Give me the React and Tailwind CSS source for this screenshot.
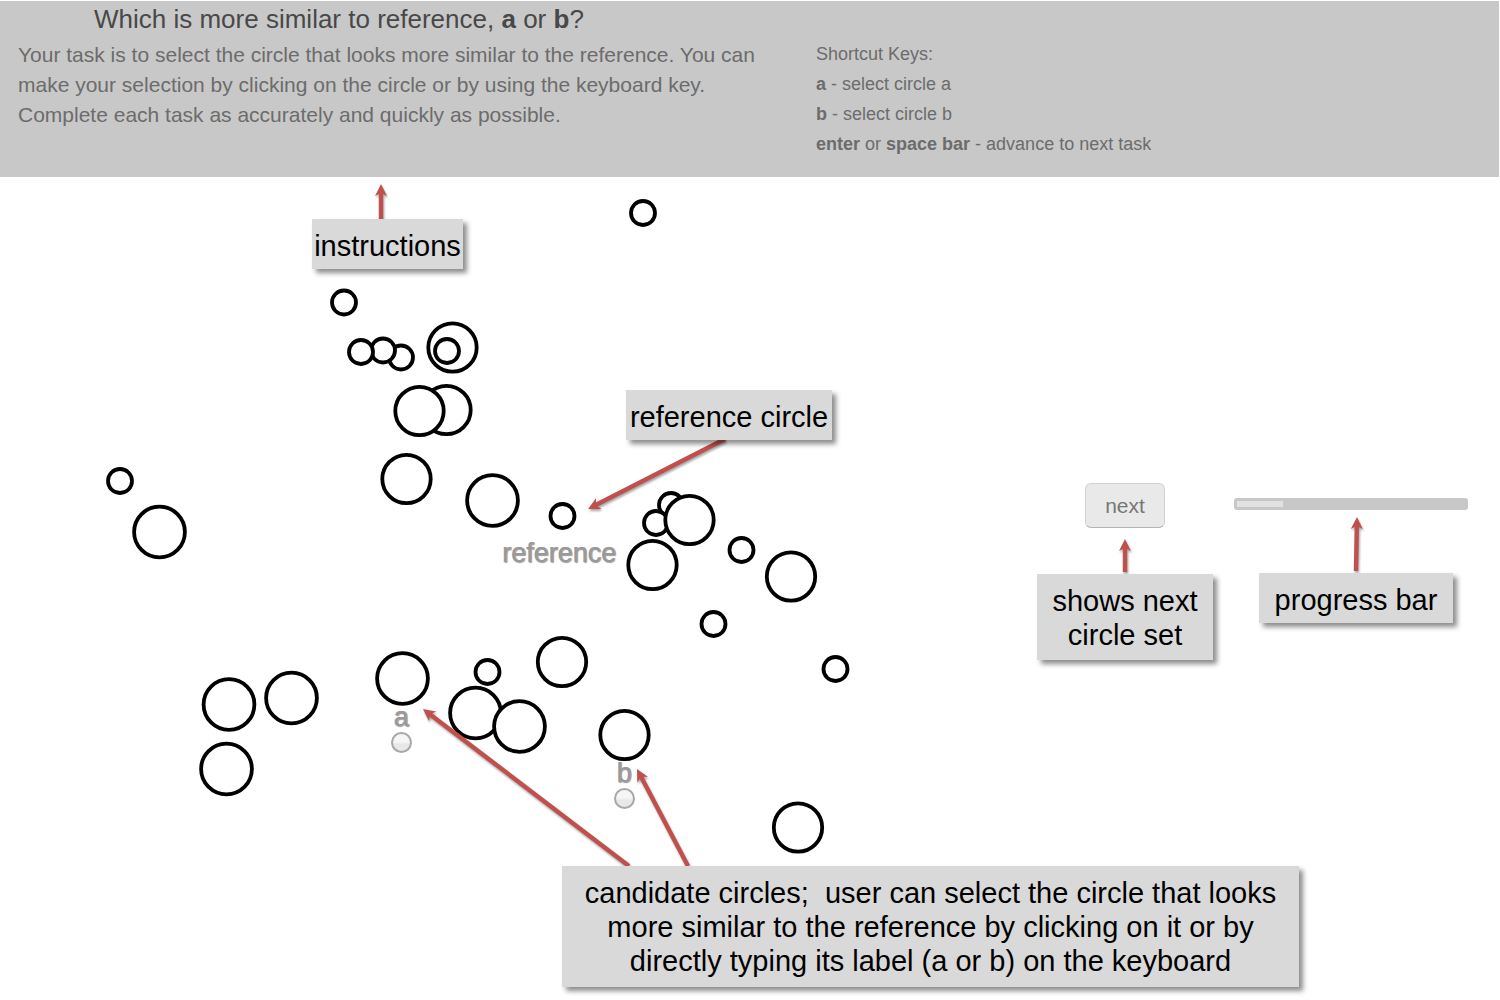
import { useEffect, useState } from "react";

const SMALL = 12;
const MEDIUM = 24.2;
const LARGE = 25.4;

const circles = [
  [643, 213, SMALL],
  [344, 302.5, SMALL],
  [401, 357.5, SMALL],
  [383, 350.5, SMALL],
  [361, 352, SMALL],
  [452.5, 347.5, MEDIUM],
  [447, 351, SMALL],
  [446.5, 410, MEDIUM],
  [419.5, 411, MEDIUM],
  [406.5, 479, MEDIUM],
  [492.5, 500.5, LARGE],
  [562.5, 516, SMALL],
  [671, 505, SMALL],
  [656, 523, SMALL],
  [689.5, 520, MEDIUM],
  [652.5, 565, MEDIUM],
  [741.5, 550, SMALL],
  [791, 576.5, MEDIUM],
  [713.5, 624, SMALL],
  [835.5, 669, SMALL],
  [120, 481, SMALL],
  [159.5, 532, LARGE],
  [229, 704.5, LARGE],
  [291.5, 698, LARGE],
  [226.5, 769, LARGE],
  [402.5, 678.5, LARGE, "a"],
  [487.5, 672, SMALL],
  [475.5, 713, LARGE],
  [519.5, 726.5, LARGE],
  [562, 662, MEDIUM],
  [624.5, 735, MEDIUM, "b"],
  [798, 827.5, MEDIUM],
];

const canvasArrows = [
  [381, 220, 381, 184],
  [725, 439, 588, 509],
  [629, 866, 423, 709],
  [688, 866, 637, 769],
];

function Arrow({ from, to }) {
  const [x1, y1] = from;
  const [x2, y2] = to;
  const length = Math.hypot(x2 - x1, y2 - y1);
  const angle = (Math.atan2(y2 - y1, x2 - x1) * 180) / Math.PI;
  return (
    <g className="drop-shadow-[1px_2px_1px_rgba(0,0,0,0.35)]">
      <g transform={`translate(${x1} ${y1}) rotate(${angle})`} fill="#c0504d">
        <rect x="0" y="-2.2" width={length - 7} height="4.4" />
        <path d={`M${length} 0 L${length - 12} -6 L${length - 9} 0 L${length - 12} 6 Z`} />
      </g>
    </g>
  );
}

function Callout({ className, children }) {
  return (
    <div
      className={`bg-[#d9d9d9] pt-[10px] text-center text-[29px] leading-[34px] text-black shadow-[4px_4px_5px_rgba(0,0,0,0.45)] ${className}`}
    >
      {children}
    </div>
  );
}

function Candidate({ name, selected, onSelect, className }) {
  return (
    <label
      className={`absolute flex w-6 flex-col items-center gap-[3px] text-[27px] leading-6 text-[#999999] [text-shadow:1px_0_0_#a8a8a8,1px_1px_1px_#999999] ${className}`}
    >
      {name}
      <input
        type="radio"
        name="candidate"
        value={name}
        checked={selected === name}
        onChange={() => onSelect(name)}
        className="size-[21px] appearance-none rounded-full border-2 border-[#a8a8a8] bg-linear-to-b from-[#f6f6f6] from-45% to-[#e8e8e8] to-60% checked:border-[6px]"
      />
    </label>
  );
}

export default function App() {
  const [selected, setSelected] = useState(null);

  useEffect(() => {
    const onKey = (e) => {
      if (e.key === "a" || e.key === "b") setSelected(e.key);
    };
    window.addEventListener("keydown", onKey);
    return () => window.removeEventListener("keydown", onKey);
  }, []);

  return (
    <div className="min-h-screen overflow-x-hidden bg-white pt-px font-['Liberation_Sans',Arial,sans-serif]">
      <header className="mr-px flex h-44 gap-14 bg-[#c8c8c8] pl-[18px] text-[#6c6c6c]">
        <div className="w-[742px] shrink-0">
          <h1 className="pl-[76px] text-[26px] leading-9 text-[#484848]">
            Which is more similar to reference, <b>a</b> or <b>b</b>?
          </h1>
          <p className="pt-[3px] text-[21px] leading-[30px] whitespace-nowrap">
            Your task is to select the circle that looks more similar to the reference. You can
            <br />
            make your selection by clicking on the circle or by using the keyboard key.
            <br />
            Complete each task as accurately and quickly as possible.
          </p>
        </div>
        <div className="pt-[38px] text-[18px] leading-[30px]">
          <p>Shortcut Keys:</p>
          <p><b>a</b> - select circle a</p>
          <p><b>b</b> - select circle b</p>
          <p><b>enter</b> or <b>space bar</b> - advance to next task</p>
        </div>
      </header>

      <main className="relative flex">
        <section aria-label="Circle set" className="relative w-[1037px] shrink-0">
          <svg viewBox="0 177 1037 823" width="1037" height="823" className="block">
            {circles.map(([x, y, r, name]) => (
              <circle
                key={`${x}-${y}`}
                cx={x}
                cy={y}
                r={r}
                fill="white"
                stroke="black"
                strokeWidth="3.8"
                onClick={name ? () => setSelected(name) : undefined}
              />
            ))}
            {canvasArrows.map(([x1, y1, x2, y2]) => (
              <Arrow key={`${x2}-${y2}`} from={[x1, y1]} to={[x2, y2]} />
            ))}
          </svg>
          <span className="absolute top-[360px] left-[502px] text-[27px] leading-8 text-[#999999] [text-shadow:1px_0_0_#a8a8a8,1px_1px_1px_#999999]">
            reference
          </span>
          <Candidate name="a" selected={selected} onSelect={setSelected} className="top-[528px] left-[389px]" />
          <Candidate name="b" selected={selected} onSelect={setSelected} className="top-[584px] left-[612px]" />
          <Callout className="absolute top-[42px] left-[312px] w-[151px] pb-[6px]">instructions</Callout>
          <Callout className="absolute top-[213px] left-[626px] w-[206px] pb-[6px]">reference circle</Callout>
        </section>

        <aside className="flex flex-1 gap-[21px] pt-[306px] pr-8">
          <div className="flex w-44 shrink-0 flex-col items-center">
            <button
              type="button"
              onClick={() => setSelected(null)}
              className="h-[45px] w-20 rounded-md border border-[#d2d2d2] border-b-[#b4b4b4] bg-[#e9e9e9] text-[21px] leading-6 text-[#777777]"
            >
              next
            </button>
            <svg width="20" height="46" className="block">
              <Arrow from={[10, 44]} to={[10, 11]} />
            </svg>
            <Callout className="w-full px-3 pb-2">shows next circle set</Callout>
          </div>
          <div className="flex flex-1 flex-col pt-[15px]">
            <div
              role="progressbar"
              aria-label="Progress"
              aria-valuenow={20}
              aria-valuemin={0}
              aria-valuemax={100}
              className="h-3 rounded-[3px] bg-[#c8c8c8] p-[3px]"
            >
              <div className="h-full w-1/5 bg-[#e2e2e2]" />
            </div>
            <div className="flex flex-col items-center pr-[15px] pl-[25px]">
              <svg width="20" height="63" className="block">
                <Arrow from={[10, 61]} to={[11, 7]} />
              </svg>
              <Callout className="w-full pb-[6px]">progress bar</Callout>
            </div>
          </div>
        </aside>

        <Callout className="absolute top-[689px] left-[562px] w-[737px] px-2 pb-[9px]">
          candidate circles;&nbsp; user can select the circle that looks
          <br />
          more similar to the reference by clicking on it or by
          <br />
          directly typing its label (a or b) on the keyboard
        </Callout>
      </main>
    </div>
  );
}
